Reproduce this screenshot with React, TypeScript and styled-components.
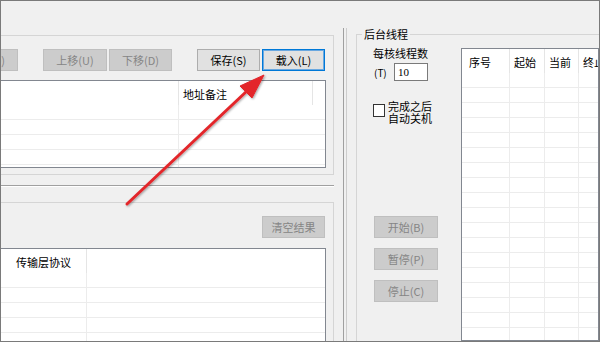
import React from 'react';
import styled, { createGlobalStyle, css } from 'styled-components';

const FONT = `"Noto Sans CJK SC", "Noto Sans", sans-serif`;

const Global = createGlobalStyle`
  html, body { margin: 0; padding: 0; background: #f0f0f0; }
  body { font-family: ${FONT}; }
`;

const Window = styled.div`
  position: relative;
  width: 600px;
  height: 342px;
  box-sizing: border-box;
  border: 1px solid #7a7a7a;
  background: #f0f0f0;
  display: flex;
  overflow: hidden;
  font-family: ${FONT};
  font-size: 11px;
  color: #000;
`;

const LeftPane = styled.div`
  width: 342px;
  flex: none;
  display: flex;
  flex-direction: column;
`;

const TopGroup = styled.div`
  margin-top: 34px;
  width: 333px;
  height: 140px;
  box-sizing: border-box;
  border: 1px solid #d5d5d5;
  border-left: none;
  padding-top: 13px;
  display: flex;
  flex-direction: column;
`;

const BottomGroup = styled.div`
  margin-top: 15px;
  width: 333px;
  flex: 1;
  min-height: 0;
  box-sizing: border-box;
  border-top: 1px solid #d5d5d5;
  border-right: 1px solid #d5d5d5;
  padding-top: 13px;
  display: flex;
  flex-direction: column;
`;

const HSplit = styled.div`
  margin-top: 10px;
  width: 333px;
  height: 2px;
  box-sizing: border-box;
  border-top: 1px solid #a0a0a0;
  border-bottom: 1px solid #ffffff;
`;

const VSplit = styled.div`
  margin-top: 27px;
  width: 4px;
  flex: none;
  box-sizing: border-box;
  border-left: 1px solid #a0a0a0;
  border-right: 1px solid #cdcdcd;
`;

const ButtonRow = styled.div`
  display: flex;
  padding-right: 8px;
  height: 22px;
  flex: none;
`;

const RightAlignRow = styled(ButtonRow)`
  justify-content: flex-end;
`;

type BtnKind = 'disabled' | 'normal' | 'focus';

const Button = styled.button<{ $kind: BtnKind; $w: number; $ml?: string }>`
  width: ${(p) => p.$w}px;
  height: 22px;
  box-sizing: border-box;
  padding: 0;
  margin: 0 0 0 ${(p) => p.$ml ?? '0'};
  font-family: ${FONT};
  font-size: 11px;
  line-height: 20px;
  flex: none;
  ${(p) =>
    p.$kind === 'disabled'
      ? css`
          background: #cccccc;
          border: 1px solid #bfbfbf;
          color: #858585;
        `
      : p.$kind === 'focus'
      ? css`
          background: #e1e1e1;
          border: 1px solid #0078d7;
          box-shadow: inset 0 0 0 1px #6aa8e0;
          color: #000;
        `
      : css`
          background: #e1e1e1;
          border: 1px solid #adadad;
          color: #000;
        `}
`;

const List = styled.div<{
  $h?: number;
  $w?: number;
  $noLeft?: boolean;
  $noBottom?: boolean;
  $ml?: number;
  $mt: number;
}>`
  margin-top: ${(p) => p.$mt}px;
  margin-left: ${(p) => p.$ml ?? 0}px;
  ${(p) => (p.$w ? `width: ${p.$w}px;` : 'min-width: 0;')}
  background: #fff;
  border: 1px solid #828790;
  ${(p) => p.$noLeft && 'border-left: none;'}
  ${(p) => p.$noBottom && 'border-bottom: none;'}
  box-sizing: border-box;
  overflow: hidden;
  display: flex;
  flex-direction: column;
  ${(p) => (p.$h ? `height: ${p.$h}px; flex: none;` : 'flex: 1; min-height: 0;')}
`;

const Header = styled.div`
  display: flex;
  height: 24px;
  flex: none;
`;

const HeadCell = styled.div<{ $w?: number; $pad: number; $line: boolean }>`
  ${(p) => (p.$w ? `width: ${p.$w}px; flex: none;` : 'flex: 1;')}
  box-sizing: border-box;
  padding-left: ${(p) => p.$pad}px;
  line-height: 26px;
  white-space: nowrap;
  overflow: hidden;
  border-right: ${(p) => (p.$line ? '1px solid #e5e5e5' : 'none')};
`;

const Row = styled.div`
  display: flex;
  height: 15px;
  flex: none;
  box-sizing: border-box;
  border-bottom: 1px solid #ececec;
`;

const Cell = styled.div<{ $w?: number; $line: boolean }>`
  ${(p) => (p.$w ? `width: ${p.$w}px; flex: none;` : 'flex: 1;')}
  box-sizing: border-box;
  border-right: ${(p) => (p.$line ? '1px solid #ececec' : 'none')};
`;

type Col = { w?: number; label: string; pad: number; head: boolean; body: boolean };

const ListView: React.FC<{
  cols: Col[];
  rows: number;
  h?: number;
  w?: number;
  mt: number;
  ml?: number;
  noLeft?: boolean;
  noBottom?: boolean;
}> = ({ cols, rows, h, w, mt, ml, noLeft, noBottom }) => (
  <List $h={h} $w={w} $mt={mt} $ml={ml} $noLeft={noLeft} $noBottom={noBottom}>
    <Header>
      {cols.map((c, i) => (
        <HeadCell key={i} $w={c.w} $pad={c.pad} $line={c.head}>
          {c.label}
        </HeadCell>
      ))}
    </Header>
    {Array.from({ length: rows }).map((_, r) => (
      <Row key={r}>
        {cols.map((c, i) => (
          <Cell key={i} $w={c.w} $line={c.body} />
        ))}
      </Row>
    ))}
  </List>
);

const RightPane = styled.div`
  flex: 1;
  min-width: 0;
  display: flex;
  flex-direction: column;
`;

const Fieldset = styled.fieldset`
  margin: 26px 0 0 9px;
  padding: 0;
  min-width: 0;
  flex: 1;
  min-height: 0;
  border: 1px solid #d5d5d5;
  border-right: none;
  border-bottom: none;
  display: flex;
  flex-direction: column;
`;

const Legend = styled.legend`
  margin-left: 5px;
  padding: 0 2px;
  font-size: 11px;
  line-height: 14px;
`;

const FieldRow = styled.div`
  flex: 1;
  min-height: 0;
  display: flex;
`;

const Controls = styled.div`
  width: 65px;
  margin-left: 16px;
  flex: none;
  display: flex;
  flex-direction: column;
`;

const Label = styled.div`
  margin-top: 6px;
  line-height: 12px;
  white-space: nowrap;
`;

const InputRow = styled.div`
  margin-top: 4px;
  display: flex;
  align-items: center;
  height: 18px;
`;

const Accel = styled.span`
  margin-left: 1px;
  width: 20px;
  font-size: 10px;
`;

const TextInput = styled.input`
  width: 34px;
  height: 18px;
  box-sizing: border-box;
  border: 1px solid #7a7a7a;
  background: #fff;
  padding: 0 0 0 3px;
  margin: 0;
  font-family: "Liberation Serif", serif;
  font-size: 11px;
  color: #000;
  outline: none;
`;

const CheckRow = styled.label`
  margin-top: 23px;
  height: 19px;
  display: flex;
  align-items: flex-start;
`;

const CheckBox = styled.span`
  width: 12px;
  height: 13px;
  box-sizing: border-box;
  border: 1px solid #333;
  background: #fff;
  flex: none;
`;

const CheckText = styled.span`
  margin: -4px 0 0 3px;
  line-height: 12px;
  white-space: nowrap;
`;

const ButtonStack = styled.div`
  margin-top: 93px;
  margin-left: 1px;
  display: flex;
  flex-direction: column;
  gap: 10px;
`;

const Overlay = styled.svg`
  position: absolute;
  left: -1px;
  top: -1px;
  pointer-events: none;
`;

const topCols: Col[] = [
  { w: 178, label: '', pad: 4, head: true, body: true },
  { w: 134, label: '地址备注', pad: 4, head: true, body: false },
  { label: '', pad: 4, head: false, body: false },
];

const bottomCols: Col[] = [
  { w: 86, label: '传输层协议', pad: 15, head: true, body: true },
  { label: '', pad: 4, head: false, body: false },
];

const threadCols: Col[] = [
  { w: 48, label: '序号', pad: 7, head: true, body: true },
  { w: 35, label: '起始', pad: 4, head: true, body: true },
  { w: 34, label: '当前', pad: 4, head: true, body: true },
  { label: '终止', pad: 4, head: false, body: false },
];

export default function App() {
  return (
    <>
      <Global />
      <Window>
        <LeftPane>
          <TopGroup>
            <ButtonRow>
              <Button $kind="disabled" $w={63} $ml="-46px" disabled>
                删除(D)
              </Button>
              <Button $kind="disabled" $w={64} $ml="25px" disabled>
                上移(U)
              </Button>
              <Button $kind="disabled" $w={63} $ml="2px" disabled>
                下移(D)
              </Button>
              <Button $kind="normal" $w={63} $ml="auto">
                保存(S)
              </Button>
              <Button $kind="focus" $w={63} $ml="2px">
                载入(L)
              </Button>
            </ButtonRow>
            <ListView cols={topCols} rows={5} h={88} w={325} mt={9} noLeft />
          </TopGroup>
          <HSplit />
          <BottomGroup>
            <RightAlignRow>
              <Button $kind="disabled" $w={63} disabled>
                清空结果
              </Button>
            </RightAlignRow>
            <ListView cols={bottomCols} rows={6} w={325} mt={10} noLeft noBottom />
          </BottomGroup>
        </LeftPane>
        <VSplit />
        <RightPane>
          <Fieldset>
            <Legend>后台线程</Legend>
            <FieldRow>
              <Controls>
                <Label>每核线程数</Label>
                <InputRow>
                  <Accel>(T)</Accel>
                  <TextInput defaultValue="10" />
                </InputRow>
                <CheckRow>
                  <CheckBox />
                  <CheckText>
                    完成之后
                    <br />
                    自动关机
                  </CheckText>
                </CheckRow>
                <ButtonStack>
                  <Button $kind="disabled" $w={64} disabled>
                    开始(B)
                  </Button>
                  <Button $kind="disabled" $w={64} disabled>
                    暂停(P)
                  </Button>
                  <Button $kind="disabled" $w={64} disabled>
                    停止(C)
                  </Button>
                </ButtonStack>
              </Controls>
              <ListView cols={threadCols} rows={20} mt={7} ml={23} />
            </FieldRow>
          </Fieldset>
        </RightPane>
        <Overlay width="600" height="342" viewBox="0 0 600 342">
          <defs>
            <filter id="sh" x="-20%" y="-20%" width="140%" height="140%">
              <feDropShadow dx="1" dy="1" stdDeviation="0.8" floodColor="#000" floodOpacity="0.35" />
            </filter>
          </defs>
          <g filter="url(#sh)" fill="#e3262b" stroke="#e3262b">
            <line x1="127" y1="204" x2="248" y2="90" strokeWidth="3" strokeLinecap="round" />
            <polygon points="264,75 252,98 246,92 240,86" strokeWidth="1" strokeLinejoin="round" />
          </g>
        </Overlay>
      </Window>
    </>
  );
}
